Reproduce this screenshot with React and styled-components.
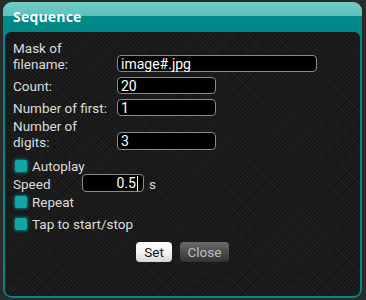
import React from "react";
import styled, { createGlobalStyle } from "styled-components";

const Global = createGlobalStyle`
  html, body { margin: 0; padding: 0; }
  body {
    width: 366px; height: 300px; overflow: hidden;
    background: #2a2a2a;
    font-family: Roboto, "Liberation Sans", sans-serif;
  }
`;

const Dialog = styled.div`
  box-sizing: border-box;
  margin: 2px 4px 0 3px;
  width: 359px;
  height: 296px;
  border-radius: 9px;
  background: #058785;
  padding: 0 2px 2px 2px;
  display: flex;
  flex-direction: column;
`;

const Header = styled.div`
  height: 30px;
  margin: 0 -2px;
  border-radius: 9px 9px 0 0;
  background: linear-gradient(#72cdc9 0%, #5ec0bc 46%, #008b89 48%, #008786 100%);
  display: flex;
  align-items: center;
  padding: 0 0 2px 10px;
  box-sizing: border-box;
  color: #fff;
  font-family: "Open Sans", sans-serif;
  font-weight: 700;
  font-size: 14px;
  letter-spacing: 0.2px;
`;

const Body = styled.div`
  flex: 1;
  border-radius: 6px;
  background-color: #1b1b1b;
  background-image:
    repeating-linear-gradient(45deg, rgba(255,255,255,0.025) 0 1px, transparent 1px 3px),
    repeating-linear-gradient(-45deg, rgba(0,0,0,0.25) 0 1px, transparent 1px 3px);
  padding: 8px 8px 0 8px;
  display: flex;
  flex-direction: column;
  color: #dcdcdc;
  font-size: 13.5px;
`;

const FormRow = styled.div`
  display: flex;
  align-items: flex-end;
  margin-top: ${(p) => p.$gap || 0}px;
`;

const Label = styled.div`
  width: ${(p) => p.$w || 104}px;
  line-height: 16px;
  flex-shrink: 0;
`;

const Input = styled.div`
  box-sizing: border-box;
  width: ${(p) => p.$w}px;
  height: ${(p) => p.$h || 17}px;
  background: #000;
  border: 1px solid #8a8a8a;
  border-radius: 4px;
  color: #fff;
  font-size: 14px;
  line-height: 16px;
  padding: 0 3px;
  display: flex;
  align-items: center;
  justify-content: ${(p) => (p.$right ? "flex-end" : "flex-start")};
`;

const Caret = styled.span`
  display: inline-block;
  width: 1px;
  height: 15px;
  background: #fff;
  margin-left: 1px;
  margin-right: 2px;
`;

const CheckRow = styled.div`
  display: flex;
  align-items: center;
  gap: 5px;
  margin-top: ${(p) => p.$gap || 0}px;
  padding-left: 2px;
  line-height: 16px;
`;

const Box = styled.span`
  width: 12px;
  height: 12px;
  border-radius: 2px;
  background: #11a7a6;
  box-shadow: 0 0 3px 1px rgba(20, 190, 190, 0.55);
`;

const Unit = styled.span`
  margin-left: 5px;
  line-height: 16px;
`;

const Buttons = styled.div`
  display: flex;
  justify-content: center;
  gap: 8px;
  margin-top: 10px;
`;

const Button = styled.div`
  box-sizing: border-box;
  height: 20px;
  width: ${(p) => p.$w}px;
  border-radius: 4px;
  display: flex;
  align-items: center;
  justify-content: center;
  font-size: 13.5px;
  color: ${(p) => (p.$light ? "#111" : "#bdbdbd")};
  background: ${(p) =>
    p.$light
      ? "linear-gradient(#ffffff, #f2f2f2 55%, #d6d6d6)"
      : "linear-gradient(#6a6a6a, #4a4a4a 55%, #333)"};
`;

export default function App() {
  return (
    <>
      <Global />
      <Dialog>
        <Header>Sequence</Header>
        <Body>
          <FormRow>
            <Label>Mask of<br />filename:</Label>
            <Input $w={200}>image#.jpg</Input>
          </FormRow>
          <FormRow $gap={5}>
            <Label>Count:</Label>
            <Input $w={99}>20</Input>
          </FormRow>
          <FormRow $gap={5}>
            <Label>Number of first:</Label>
            <Input $w={99}>1</Input>
          </FormRow>
          <FormRow $gap={2}>
            <Label>Number of<br />digits:</Label>
            <Input $w={99} $h={18}>3</Input>
          </FormRow>
          <CheckRow $gap={8}><Box />Autoplay</CheckRow>
          <FormRow $gap={0}>
            <Label $w={69}>Speed</Label>
            <Input $w={62} $h={18} $right>0.5<Caret /></Input>
            <Unit>s</Unit>
          </FormRow>
          <CheckRow $gap={2}><Box />Repeat</CheckRow>
          <CheckRow $gap={6}><Box />Tap to start/stop</CheckRow>
          <Buttons>
            <Button $w={36} $light>Set</Button>
            <Button $w={49}>Close</Button>
          </Buttons>
        </Body>
      </Dialog>
    </>
  );
}
